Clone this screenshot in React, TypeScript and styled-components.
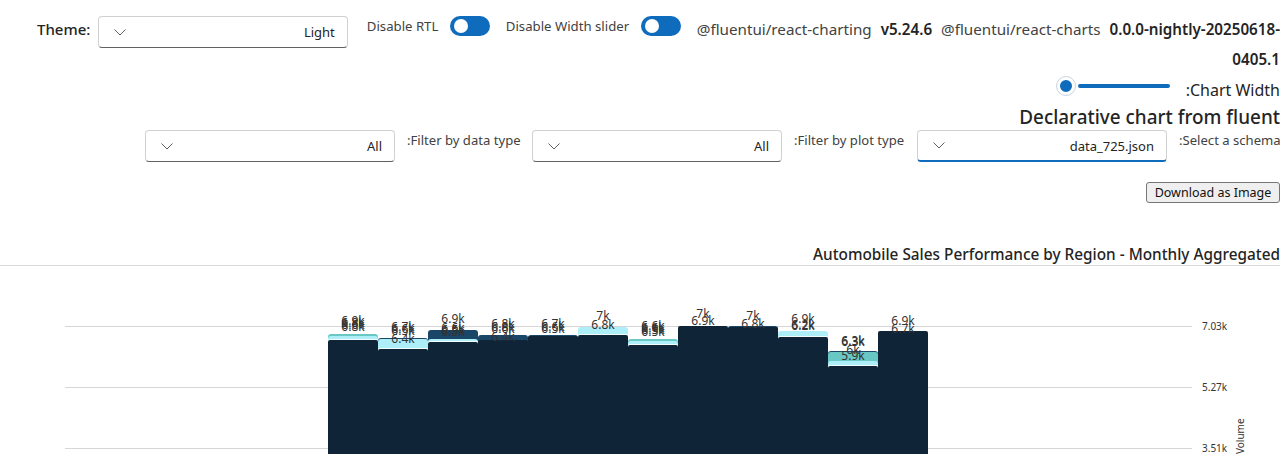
import styled, { createGlobalStyle } from 'styled-components'

const bars = [
  { segments: [['#69c8c4', 334], ['#aeeef8', 336]], top: 340, labels: [[6.9, 325], [6.8, 327], [6.6, 329], [6.8, 331]] },
  { segments: [['#1a4668', 338], ['#aeeef8', 339]], top: 349, labels: [[6.7, 331], [6.6, 333], [6.5, 335], [6.4, 343]] },
  { segments: [['#1a4668', 330], ['#aeeef8', 339]], top: 342, labels: [[6.9, 323], [6.6, 332], [6.5, 334], [6.5, 336]] },
  { segments: [['#1a4668', 335]], top: 340, labels: [[6.8, 328], [6.8, 331], [6.6, 333], [6.4, 341]] },
  { segments: [['#1a4668', 335]], top: 336, labels: [[6.7, 328], [6.6, 331], [6.5, 333]] },
  { segments: [['#aeeef8', 327]], top: 335, labels: [[7, 320], [6.8, 329]] },
  { segments: [['#69c8c4', 339], ['#aeeef8', 341]], top: 345, labels: [[6.6, 330], [6.6, 332], [6.5, 334], [6.5, 336]] },
  { segments: [], top: 326, labels: [[7, 318], [6.9, 325]] },
  { segments: [['#1a4668', 326]], top: 327, labels: [[7, 320], [6.8, 328]] },
  { segments: [['#aeeef8', 331]], top: 337, labels: [[6.9, 323], [6.2, 329], [6.2, 330]] },
  { segments: [['#1a4668', 351], ['#69c8c4', 352], ['#aeeef8', 361]], top: 366, labels: [[6.3, 345], [6.3, 346], [6, 354], [5.9, 360]] },
  { segments: [], top: 331, labels: [[6.9, 325], [6.7, 333]] },
] as const

const ticks = [
  ['7.03k', 326],
  ['5.27k', 387],
  ['3.51k', 448],
] as const

function Chevron() {
  return (
    <svg width="12" height="7" viewBox="0 0 12 7" fill="none">
      <path d="M0.5 0.5 L6 6 L11.5 0.5" stroke="#616161" strokeWidth="1" />
    </svg>
  )
}

function Select({ value, focused }: { value: string; focused?: boolean }) {
  return (
    <Dropdown $focused={focused}>
      <Chevron />
      <span>{value}</span>
    </Dropdown>
  )
}

function Chart() {
  return (
    <svg width="1280" height="188" viewBox="0 266 1280 188" style={{ display: 'block' }}>
      {ticks.map(([label, y]) => (
        <g key={label}>
          <line x1="65" x2="1192" y1={y + 0.5} y2={y + 0.5} stroke="#d6d6d6" strokeWidth="1" />
          <text x="1202" y={y + 4} fontSize="10" fill="#333" fontFamily="Noto Sans, sans-serif">{label}</text>
        </g>
      ))}
      <text
        transform="translate(1244 454) rotate(-90)"
        fontSize="10"
        fill="#333"
        fontFamily="Noto Sans, sans-serif"
      >
        Volume
      </text>
      {bars.map((bar, i) => {
        const x = 328 + i * 50
        const last = bar.segments[bar.segments.length - 1]
        return (
          <g key={x}>
            {bar.segments.map(([color, y]) => (
              <rect key={`${color}${y}`} x={x} y={y} width="50" height={460 - y} rx="3" fill={color} />
            ))}
            {last && last[0] === '#aeeef8' && (
              <rect x={x} y={bar.top - 1} width="50" height="3" fill="#fff" opacity="0.85" rx="1.5" />
            )}
            <rect x={x} y={bar.top} width="50" height={460 - bar.top} rx="2" fill="#102437" />
          </g>
        )
      })}
      {bars.map((bar, i) =>
        bar.labels.map(([value, y], n) => (
          <text
            key={`${i}-${n}`}
            x={353 + i * 50}
            y={y}
            textAnchor="middle"
            fontSize="12"
            fill="#333"
            fontFamily="Noto Sans, sans-serif"
          >
            {value}k
          </text>
        )),
      )}
    </svg>
  )
}

export default function App() {
  return (
    <Page>
      <GlobalStyle />
      <TopRow>
        <ThemeLabel>Theme:</ThemeLabel>
        <Select value="Light" />
        <SwitchLabel $width={71} $gap={19}>Disable RTL</SwitchLabel>
        <Switch />
        <SwitchLabel $width={123} $gap={16}>Disable Width slider</SwitchLabel>
        <Switch />
        <Versions>
          @fluentui/react-charting <b>v5.24.6</b> @fluentui/react-charts{' '}
          <b>0.0.0-nightly-20250618-<br />0405.1</b>
        </Versions>
      </TopRow>
      <SliderRow>
        <Slider>
          <Thumb />
          <Track />
        </Slider>
        <SliderLabel>:Chart Width</SliderLabel>
      </SliderRow>
      <Heading>Declarative chart from fluent</Heading>
      <FilterRow>
        <Select value="All" />
        <FilterLabel $width={113}>:Filter by data type</FilterLabel>
        <Select value="All" />
        <FilterLabel $width={111}>:Filter by plot type</FilterLabel>
        <Select value="data_725.json" focused />
        <FilterLabel $width={101}>:Select a schema</FilterLabel>
      </FilterRow>
      <ButtonRow>
        <DownloadButton>Download as Image</DownloadButton>
      </ButtonRow>
      <ChartTitle>Automobile Sales Performance by Region - Monthly Aggregated</ChartTitle>
      <Chart />
    </Page>
  )
}

const GlobalStyle = createGlobalStyle`
  html, body {
    margin: 0;
    background: #fff;
    overflow: hidden;
  }
`

const Page = styled.div`
  width: 1280px;
  height: 454px;
  overflow: hidden;
  font-family: 'Noto Sans', sans-serif;
  color: #242424;
`

const TopRow = styled.div`
  display: flex;
  align-items: flex-start;
  height: 75px;
  padding: 16px 0 0 37px;
  box-sizing: border-box;
`

const ThemeLabel = styled.label`
  width: 61px;
  font-size: 15px;
  font-weight: 500;
  line-height: 27px;
`

const Dropdown = styled.div<{ $focused?: boolean }>`
  display: flex;
  align-items: center;
  justify-content: space-between;
  flex: none;
  width: 250px;
  height: 32px;
  padding: 0 12px 0 15px;
  box-sizing: border-box;
  background: #fff;
  border: 1px solid #d1d1d1;
  border-bottom: ${p => (p.$focused ? '2px solid #0f6cbd' : '1px solid #616161')};
  border-radius: 4px;
  font-size: 13px;
  color: #242424;
`

const SwitchLabel = styled.label<{ $width: number; $gap: number }>`
  flex: none;
  width: ${p => p.$width}px;
  margin-left: ${p => p.$gap}px;
  font-size: 13.2px;
  line-height: 20px;
  white-space: nowrap;
  color: #424242;
`

const Switch = styled.div`
  flex: none;
  position: relative;
  width: 40px;
  height: 20px;
  margin-left: 12px;
  border-radius: 10px;
  background: #0f6cbd;

  &::after {
    content: '';
    position: absolute;
    left: 4px;
    top: 3px;
    width: 14px;
    height: 14px;
    border-radius: 50%;
    background: #fff;
  }
`

const Versions = styled.div`
  flex: 1;
  margin: -2px 0 0 16px;
  font-size: 15.2px;
  line-height: 30px;
  text-align: right;
  color: #424242;
  word-spacing: 5px;
  white-space: nowrap;

  b {
    font-weight: 600;
    color: #242424;
  }
`

const SliderRow = styled.div`
  display: flex;
  justify-content: flex-end;
  height: 28px;
`

const Slider = styled.div`
  display: flex;
  align-items: center;
  height: 22px;
  margin-right: 16px;
`

const Thumb = styled.div`
  width: 12px;
  height: 12px;
  border: 3px solid #fff;
  outline: 1px solid #c8d4e0;
  border-radius: 50%;
  background: #0f6cbd;
`

const Track = styled.div`
  width: 92px;
  height: 4px;
  margin-left: 3px;
  border-radius: 2px;
  background: #0f6cbd;
`

const SliderLabel = styled.label`
  font-size: 16px;
  line-height: 30px;
`

const Heading = styled.h2`
  margin: 0;
  height: 27px;
  font-size: 18.9px;
  font-weight: 500;
  line-height: 28px;
  text-align: right;
`

const FilterRow = styled.div`
  display: flex;
  justify-content: flex-end;
  gap: 12px;
`

const FilterLabel = styled.label<{ $width: number }>`
  flex: none;
  width: ${p => p.$width}px;
  font-size: 13.1px;
  line-height: 20px;
  white-space: nowrap;
  color: #424242;
`

const ButtonRow = styled.div`
  display: flex;
  justify-content: flex-end;
  margin-top: 20px;
`

const DownloadButton = styled.button`
  width: 134px;
  height: 21px;
  padding: 0;
  font-family: 'Noto Sans', sans-serif;
  font-size: 12.5px;
  color: #111;
  background: #efefef;
  border: 1px solid #767676;
  border-radius: 3px;
`

const ChartTitle = styled.div`
  margin-top: 40px;
  height: 22px;
  border-bottom: 1px solid #d9d9d9;
  font-size: 15.35px;
  font-weight: 500;
  line-height: 22px;
  text-align: right;
`
